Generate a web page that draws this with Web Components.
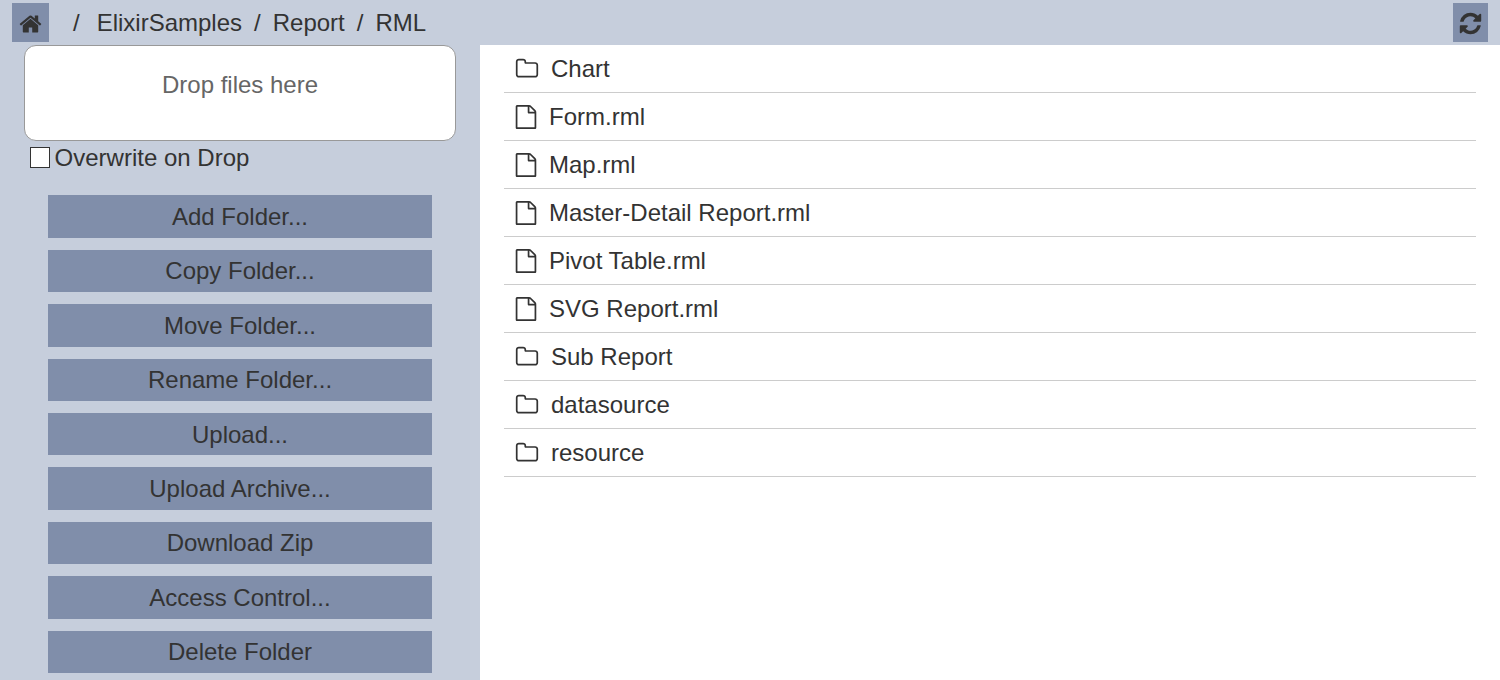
<!DOCTYPE html>
<html>
<head>
<meta charset="utf-8">
<title>Files</title>
<style>
    html, body { margin: 0; height: 100%; overflow: hidden; }
    body { font-family: "Liberation Sans", Arial, sans-serif; font-size: 24px; color: #333; background: #fff; }
    file-browser { height: 680px; }
</style>
</head>
<body>
<file-browser>
    <tool-bar slot="top">
        <bread-crumb>ElixirSamples</bread-crumb>
        <bread-crumb>Report</bread-crumb>
        <bread-crumb>RML</bread-crumb>
    </tool-bar>
    <side-panel slot="side">
        <action-button>Add Folder...</action-button>
        <action-button>Copy Folder...</action-button>
        <action-button>Move Folder...</action-button>
        <action-button>Rename Folder...</action-button>
        <action-button>Upload...</action-button>
        <action-button>Upload Archive...</action-button>
        <action-button>Download Zip</action-button>
        <action-button>Access Control...</action-button>
        <action-button>Delete Folder</action-button>
    </side-panel>
    <file-row type="folder">Chart</file-row>
    <file-row type="file">Form.rml</file-row>
    <file-row type="file">Map.rml</file-row>
    <file-row type="file">Master-Detail Report.rml</file-row>
    <file-row type="file">Pivot Table.rml</file-row>
    <file-row type="file">SVG Report.rml</file-row>
    <file-row type="folder">Sub Report</file-row>
    <file-row type="folder">datasource</file-row>
    <file-row type="folder">resource</file-row>
</file-browser>

<script>
const ICONS = {
    home: { w: 1792, d: 'M1472 992v480q0 26-19 45t-45 19h-384v-384h-256v384h-384q-26 0-45-19t-19-45v-480q0-1 .5-3t.5-3l575-474 575 474q1 2 1 6zm223-69l-62 74q-8 9-21 11h-3q-13 0-21-7l-692-577-692 577q-12 8-24 7-13-2-21-11l-62-74q-8-10-7-23.5t11-21.5l719-599q32-26 76-26t76 26l244 204v-195q0-14 9-23t23-9h192q14 0 23 9t9 23v408l219 182q10 8 11 21.5t-7 23.5z' },
    refresh: { w: 1792, d: 'M1639 1056q0 5-1 7-64 268-268 434.5t-478 166.5q-146 0-282.5-55t-243.5-157l-129 129q-19 19-45 19t-45-19-19-45v-448q0-26 19-45t45-19h448q26 0 45 19t19 45-19 45l-137 137q71 66 161 102t187 36q134 0 250-65t186-179q11-17 53-117 8-23 30-23h192q13 0 22.5 9.5t9.5 22.5zm25-800v448q0 26-19 45t-45 19h-448q-26 0-45-19t-19-45 19-45l138-138q-148-137-349-137-134 0-250 65t-186 179q-11 17-53 117-8 23-30 23h-199q-13 0-22.5-9.5t-9.5-22.5v-7q65-268 270-434.5t480-166.5q146 0 284 55.5t245 156.5l130-129q19-19 45-19t45 19 19 45z' },
    folder: { w: 1792, d: 'M1600 1312v-704q0-40-28-68t-68-28h-704q-40 0-68-28t-28-68v-64q0-40-28-68t-68-28h-320q-40 0-68 28t-28 68v960q0 40 28 68t68 28h1216q40 0 68-28t28-68zm128-704v704q0 92-66 158t-158 66h-1216q-92 0-158-66t-66-158v-960q0-92 66-158t158-66h320q92 0 158 66t66 158v32h672q92 0 158 66t66 158z' },
    file: { w: 1792, d: 'M1596 380q28 28 48 76t20 88v1152q0 40-28 68t-68 28h-1344q-40 0-68-28t-28-68v-1600q0-40 28-68t68-28h896q40 0 88 20t76 48zm-444-244v376h376q-10-29-22-41l-313-313q-12-12-41-22zm384 1528v-1024h-416q-40 0-68-28t-28-68v-416h-768v1536h1280z' }
};

function icon(name, size) {
    const i = ICONS[name];
    return `<svg class="${name}" width="${size}" height="${size}" viewBox="0 0 ${i.w} 1792" fill="currentColor"><path d="${i.d}"/></svg>`;
}

class FileBrowser extends HTMLElement {
    connectedCallback() {
        this.attachShadow({ mode: 'open' });
        this.shadowRoot.innerHTML = `
            <style>
                :host { display: grid; grid-template-columns: 480px 1fr; grid-template-rows: 45px 1fr; }
                .top { grid-column: 1 / 3; }
                .list { padding: 0 24px; overflow: hidden; }
            </style>
            <div class="top"><slot name="top"></slot></div>
            <slot name="side"></slot>
            <div class="list"><slot></slot></div>
        `;
    }
}
customElements.define('file-browser', FileBrowser);

class ToolBar extends HTMLElement {
    connectedCallback() {
        this.attachShadow({ mode: 'open' });
        this.shadowRoot.innerHTML = `
            <style>
                :host { display: flex; align-items: center; height: 45px; background: #c6cedc; padding: 0 12px; box-sizing: border-box; }
                .btn { display: flex; align-items: center; justify-content: center; background: #808eaa; height: 39px; color: #333; }
                .btn svg { margin-top: 2px; }
                .home { width: 37px; }
                .home svg { margin-left: -1px; }
                .refresh { width: 35px; margin-left: auto; }
                .crumbs { display: flex; margin-left: 24px; }
            </style>
            <div class="btn home">${icon('home', 24)}</div>
            <div class="crumbs"><slot></slot></div>
            <div class="btn refresh">${icon('refresh', 25)}</div>
        `;
    }
}
customElements.define('tool-bar', ToolBar);

class BreadCrumb extends HTMLElement {
    connectedCallback() {
        this.attachShadow({ mode: 'open' });
        this.shadowRoot.innerHTML = `
            <style>
                :host { display: block; }
                :host(:first-child) .sep { margin-right: 17px; }
                .sep { margin-right: 12px; }
                .label { margin-right: 12px; }
            </style>
            <span class="sep">/</span><span class="label"><slot></slot></span>
        `;
    }
}
customElements.define('bread-crumb', BreadCrumb);

class SidePanel extends HTMLElement {
    connectedCallback() {
        this.attachShadow({ mode: 'open' });
        this.shadowRoot.innerHTML = `
            <style>
                :host { display: block; background: #c6cedc; height: 635px; padding: 0 24px; box-sizing: border-box; }
                .drop { box-sizing: border-box; height: 96px; background: #fff; border: 1px solid #999; border-radius: 12px; color: #666; text-align: center; padding-top: 25px; line-height: 28px; }
                label { display: flex; align-items: center; height: 34px; padding-left: 6px; }
                .box { box-sizing: border-box; width: 20px; height: 21px; background: #fff; border: 1px solid #333; margin-right: 4.6px; margin-top: -2px; }
                .actions { display: flex; flex-direction: column; gap: 12px; padding: 20.4px 24px 0; }
            </style>
            <div class="drop">Drop files here</div>
            <label><span class="box"></span>Overwrite on Drop</label>
            <div class="actions"><slot></slot></div>
        `;
    }
}
customElements.define('side-panel', SidePanel);

class ActionButton extends HTMLElement {
    connectedCallback() {
        this.attachShadow({ mode: 'open' });
        this.shadowRoot.innerHTML = `
            <style>
                :host { display: flex; align-items: center; justify-content: center; box-sizing: border-box; height: 42.4px; padding-top: 1px; background: #808eaa; color: #333; }
            </style>
            <slot></slot>
        `;
    }
}
customElements.define('action-button', ActionButton);

class FileRow extends HTMLElement {
    connectedCallback() {
        const type = this.getAttribute('type');
        this.attachShadow({ mode: 'open' });
        this.shadowRoot.innerHTML = `
            <style>
                :host { display: flex; align-items: center; box-sizing: border-box; height: 48px; border-bottom: 1px solid #ccc; padding-left: 11px; }
                svg { display: block; flex: none; margin-right: 12px; margin-top: 1px; }
                svg.file { margin-left: -1px; margin-right: 11px; }
            </style>
            ${icon(type, 24)}
            <slot></slot>
        `;
    }
}
customElements.define('file-row', FileRow);
</script>
</body>
</html>
